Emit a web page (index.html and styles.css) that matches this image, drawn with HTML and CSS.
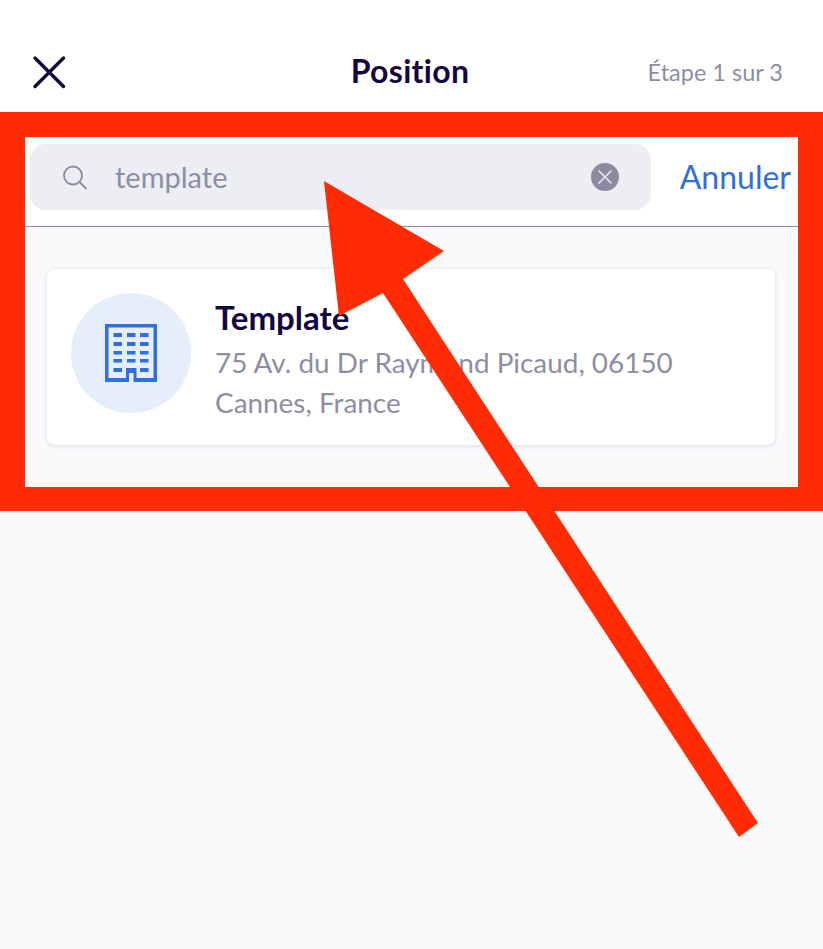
FILE: index.html
```html
<!DOCTYPE html>
<html lang="fr">
<head>
<meta charset="utf-8">
<title>Position</title>
<link rel="stylesheet" href="styles.css">
</head>
<body>
<div class="screen">
  <header class="topbar">
    <svg class="close" viewBox="0 0 34 34" width="34" height="34"><path d="M3 3L31.500 31.500M31.500 3L3 31.500" fill="none" stroke="#14063f" stroke-width="3.4" stroke-linecap="round"/></svg>
    <h1 class="title">Position</h1>
    <span class="step">Étape 1 sur 3</span>
  </header>
  <div class="searchbar">
    <div class="field">
      <svg class="mag" viewBox="0 0 26 26" width="26" height="26"><circle cx="11" cy="11.500" r="9" fill="none" stroke="#8a8b9f" stroke-width="1.800"/><path d="M17.500 18L24 24.500" stroke="#8a8b9f" stroke-width="1.800" stroke-linecap="round"/></svg>
      <span class="query">template</span>
      <svg class="clear" viewBox="0 0 28 28" width="28" height="28"><circle cx="14" cy="14" r="14" fill="#8b8a9e"/><path d="M8 8L20 20M20 8L8 20" stroke="#eceef4" stroke-width="1.500" stroke-linecap="round"/></svg>
    </div>
    <span class="cancel">Annuler</span>
  </div>
  <main class="results">
    <article class="card">
      <div class="avatar">
        <svg viewBox="0 0 52 58" width="52" height="58"><path fill="#2f6fe0" fill-rule="evenodd" d="M0 0H52V58H28.500V49H24V58H0ZM3.500 3.500V54H21V44H31.500V54H48.500V3.500Z"/><path fill="#2f6fe0" d="M8.500 9h8.500v4H8.500zM22 9h8.500v4H22zM35 9h8.500v4H35zM8.500 18h8.500v4H8.500zM22 18h8.500v4H22zM35 18h8.500v4H35zM8.500 27h8.500v3.500H8.500zM22 27h8.500v3.500H22zM35 27h8.500v3.500H35zM8.500 35h8.500v3.500H8.500zM22 35h8.500v3.500H22zM35 35h8.500v3.500H35zM8.500 44h8.500v4H8.500zM35 44h8.500v4H35z"/></svg>
      </div>
      <div class="info">
        <h2 class="name">Template</h2>
        <p class="address">75 Av. du Dr Raymond Picaud, 06150 Cannes, France</p>
      </div>
    </article>
  </main>
</div>
<svg class="annotation" viewBox="0 0 823 949" width="823" height="949">
  <path fill="#ff2b03" fill-rule="evenodd" d="M0 112H823V511H0ZM25 137V487H798V137Z"/>
  <path fill="#ff2b03" d="M324 181L444 251L403 279L758 823L739 837L383 293L339 316Z"/>
</svg>
</body>
</html>
```
FILE: styles.css
```css
* { box-sizing: border-box; }
html, body { margin: 0; padding: 0; }
body { width: 823px; height: 949px; overflow: hidden; background: #f8fafc; font-family: "Lato", "Liberation Sans", sans-serif; position: relative; }
.screen { display: flex; flex-direction: column; height: 949px; }
.topbar { height: 112px; background: #fff; padding: 55px 40px 0 32px; display: flex; align-items: flex-start; position: relative; }
.close { display: block; }
.title { position: absolute; left: 0; right: 3px; top: 52px; margin: 0; text-align: center; font-size: 32px; line-height: 38px; font-weight: 700; letter-spacing: .3px; color: #14063f; }
.step { margin-left: auto; margin-top: 2px; font-size: 23.500px; line-height: 30px; color: #8d8ea3; }
.searchbar { margin-top: 25px; height: 90px; background: #fff; border-bottom: 1px solid #8d8ea3; padding: 7px 32px 0 30px; display: flex; align-items: flex-start; }
.field { width: 621px; height: 66px; background: #eceef4; border-radius: 16px; display: flex; align-items: center; padding: 0 32px 0 32px; }
.mag { display: block; }
.query { margin-left: 27px; margin-bottom: 2px; font-size: 29px; color: #8d8ea3; }
.clear { margin-left: auto; display: block; }
.cancel { margin-left: 29px; margin-top: 13px; font-size: 32px; line-height: 40px; color: #2f6fd8; }
.results { flex: 1; padding: 42px 48px 0 47px; }
.card { height: 176px; background: #fff; border-radius: 8px; box-shadow: 0 1px 5px rgba(40,50,90,.14); padding: 24px; display: flex; gap: 24px; }
.avatar { width: 120px; height: 120px; flex: none; border-radius: 50%; background: #e6eefc; display: flex; align-items: center; justify-content: center; }
.info { min-width: 0; }
.name { margin: 4px 0 5px; font-size: 33px; line-height: 40px; font-weight: 700; color: #14063f; }
.address { margin: 0; font-size: 27.900px; line-height: 40px; color: #8d8ea3; }
.annotation { position: absolute; left: 0; top: 0; pointer-events: none; }
```
